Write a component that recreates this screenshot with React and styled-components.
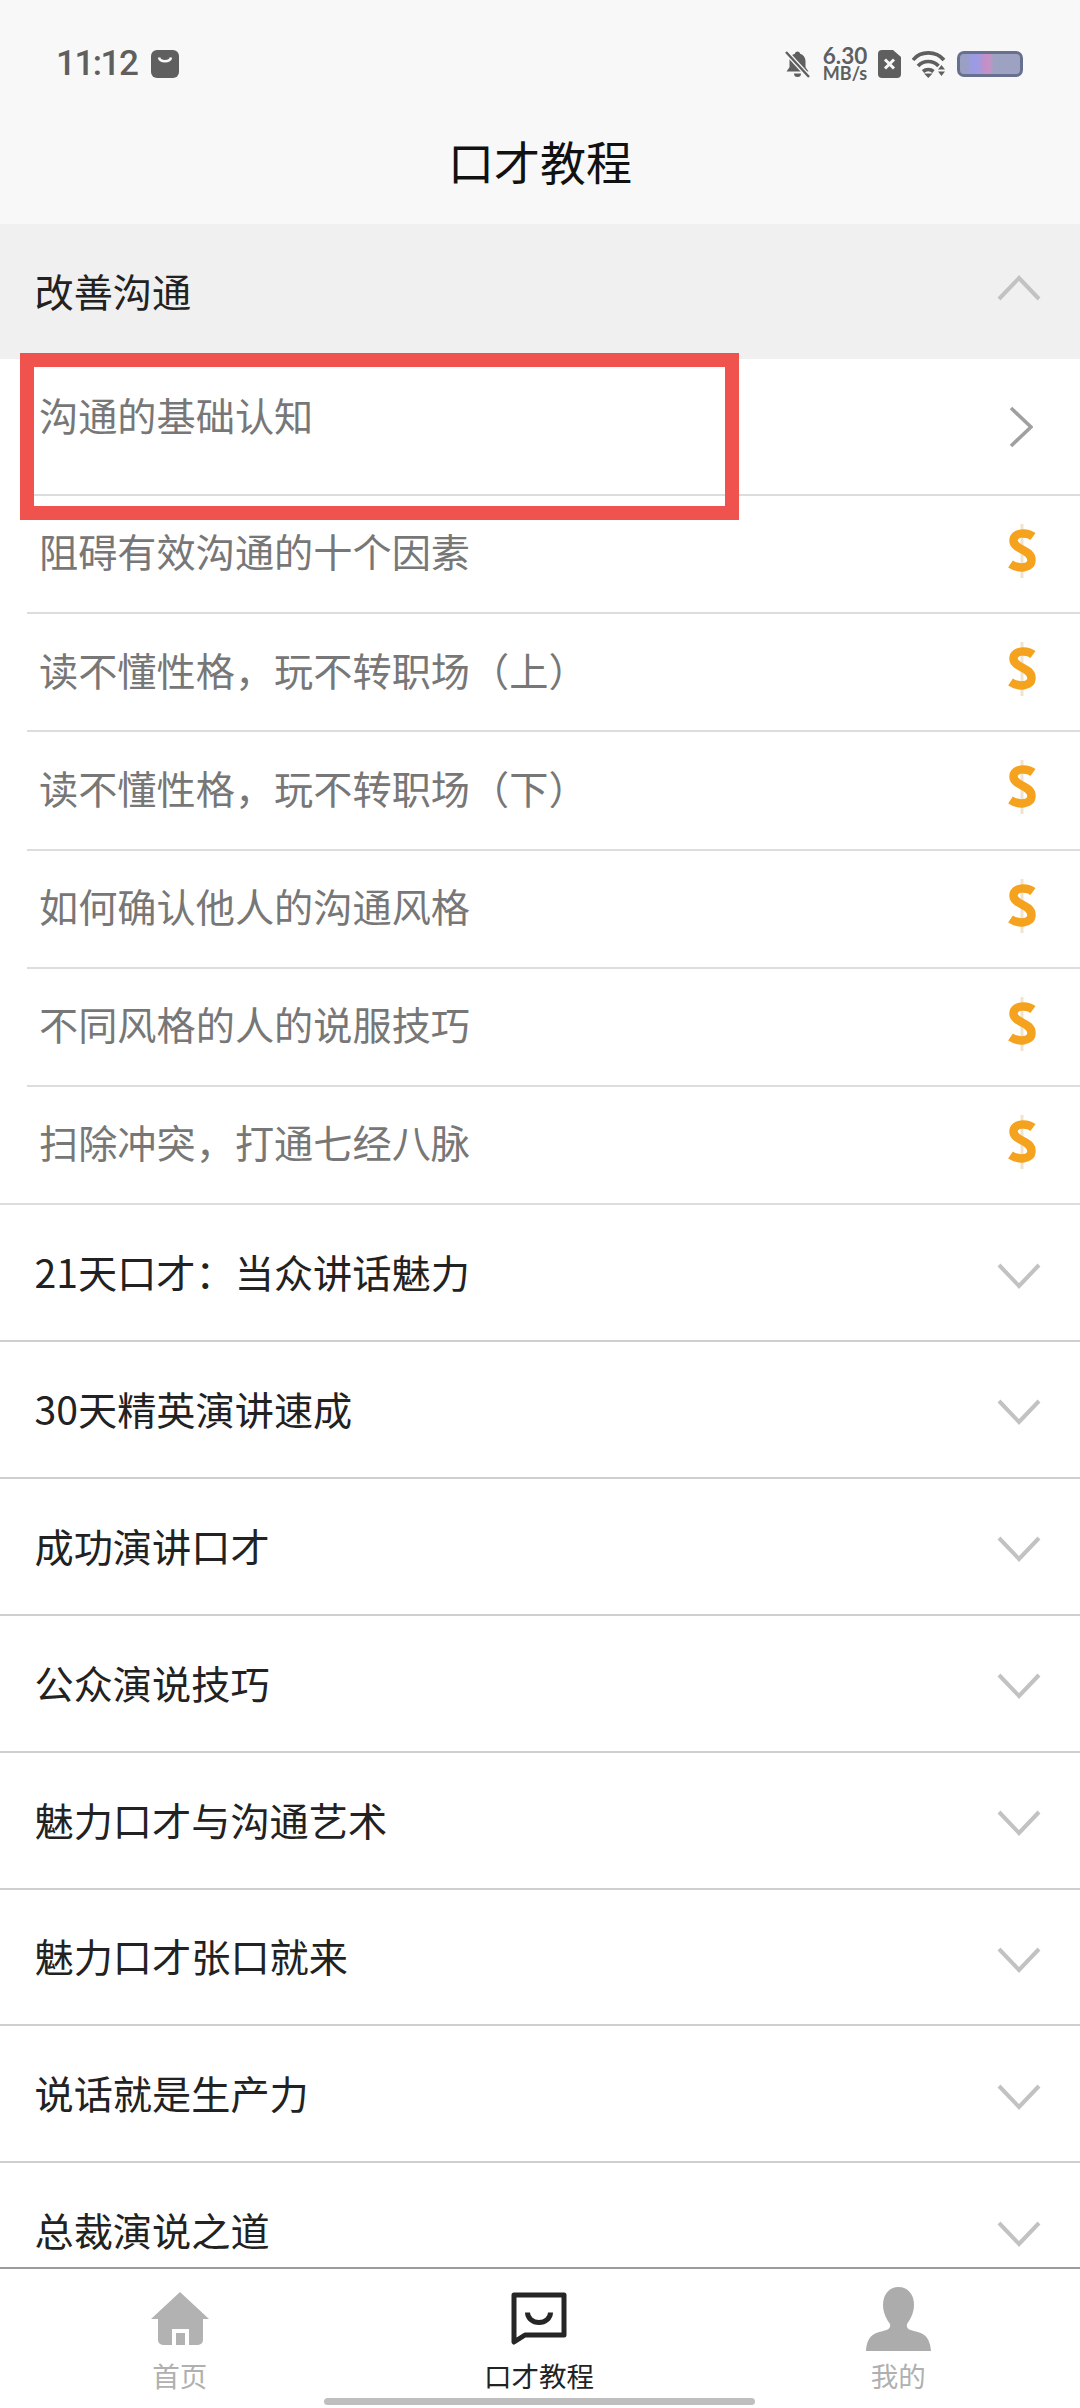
import styled, { createGlobalStyle } from "styled-components"

const GlobalStyle = createGlobalStyle`
    html, body {
        margin: 0;
        padding: 0;
        background: #ffffff;
    }
    * {
        box-sizing: border-box;
    }
`

const Page = styled.div`
    width: 1080px;
    height: 2408px;
    position: relative;
    display: flex;
    flex-direction: column;
    overflow: hidden;
    background: #ffffff;
    font-family: "Noto Sans CJK SC", "Noto Sans", sans-serif;
`
const StatusBar = styled.div`
    height: 98px;
    flex-shrink: 0;
    background: #f8f8f8;
    display: flex;
    justify-content: space-between;
    align-items: flex-start;
    padding: 46px 57px 0 56px;
    color: #5f5f5f;
`
const StatusLeft = styled.div`
    display: flex;
    align-items: center;
    gap: 14px;
    height: 36px;
`
const Clock = styled.span`
    font-family: "Roboto", sans-serif;
    font-weight: 500;
    font-size: 35px;
    line-height: 36px;
    letter-spacing: -1.5px;
`
const StatusRight = styled.div`
    display: flex;
    align-items: center;
    height: 36px;
`
const Speed = styled.div`
    width: 46px;
    margin: 0 10px 0 12px;
    display: flex;
    flex-direction: column;
    align-items: center;
    font-family: "Lato", sans-serif;
    font-weight: 700;
`
const SpeedValue = styled.span`
    font-size: 22.5px;
    line-height: 18px;
`
const SpeedUnit = styled.span`
    font-size: 18px;
    line-height: 17px;
`
const Battery = styled.div`
    width: 66px;
    height: 26px;
    margin-left: 11px;
    border: 3px solid #68708f;
    border-radius: 7px;
    background: linear-gradient(
        90deg,
        #9a9fc4 0 10%,
        #9b9be8 22%,
        #9f9ae0 30%,
        #c48fc8 42%,
        #c890c4 48%,
        #9ea2c2 56%,
        #9ea2c2 100%
    );
`
const TitleBar = styled.div`
    height: 126px;
    flex-shrink: 0;
    background: #f8f8f8;
    display: flex;
    align-items: center;
    justify-content: center;
    padding-bottom: 2px;
`
const Title = styled.h1`
    margin: 0;
    font-size: 46px;
    font-weight: 400;
    color: #111111;
    line-height: 1;
`
const List = styled.div`
    flex: 1;
    min-height: 0;
    overflow: hidden;
`
const GroupRow = styled.div`
    height: ${props => (props.$open ? "135px" : "136.9px")};
    display: flex;
    align-items: center;
    justify-content: space-between;
    padding: 0 39px 0 34.5px;
    background: ${props => (props.$open ? "#f0f0f0" : "#ffffff")};
    border-bottom: ${props => (props.$open ? "none" : "2px solid #cfcfcf")};
`
const GroupName = styled.span`
    font-size: 39.2px;
    line-height: 1;
    color: #222222;
    margin-bottom: 2px;
`
const LessonRow = styled.div`
    height: ${props => (props.$first ? "137px" : "118.2px")};
    margin-left: ${props => (props.$last ? "0" : "27px")};
    padding: ${props => (props.$last ? "0 39px 0 39px" : "0 39px 0 12px")};
    display: flex;
    align-items: center;
    justify-content: space-between;
    border-bottom: 2px solid #dddddd;
`
const LessonName = styled.span`
    font-size: 39.2px;
    line-height: 1;
    color: #777777;
    margin-bottom: ${props => (props.$first ? "24px" : "6px")};
`
const IconBox = styled.div`
    width: 40px;
    display: flex;
    justify-content: center;
    flex-shrink: 0;
`
const TabBar = styled.div`
    height: 141px;
    flex-shrink: 0;
    border-top: 2px solid #9c9c9c;
    background: #ffffff;
    display: grid;
    grid-template-columns: repeat(3, 1fr);
    padding-right: 2px;
`
const Tab = styled.div`
    display: flex;
    flex-direction: column;
    align-items: center;
`
const TabIcon = styled.div`
    height: 82px;
    display: flex;
    align-items: flex-end;
    justify-content: center;
    padding-bottom: ${props => props.$pad || "0"};
`
const TabLabel = styled.span`
    margin-top: 9px;
    font-size: 27.5px;
    line-height: 30px;
    color: ${props => (props.$active ? "#222222" : "#b0b0b0")};
`
const Highlight = styled.div`
    position: absolute;
    left: 20px;
    top: 353px;
    width: 719px;
    height: 167px;
    border: 14px solid #f0534e;
    pointer-events: none;
`
const GestureBar = styled.div`
    position: absolute;
    left: 324px;
    top: 2398px;
    width: 431px;
    height: 7px;
    border-radius: 4px;
    background: #bfbfbf;
`
const WifiSvg = styled.svg`
    margin-left: 11px;
`
const FoldSvg = styled.svg`
    margin: ${props => (props.$up ? "0 0 7px 0" : "6px 0 0 0")};
`
const DollarSvg = styled.svg`
    margin: 0 -1px 6px 0;
`

const BagIcon = () => (
    <svg width="28" height="28" viewBox="0 0 28 28">
        <rect width="28" height="28" rx="6" fill="#5f5f5f" />
        <path d="M8 7.5c1 5 11 5 12 0" fill="none" stroke="#f8f8f8" strokeWidth="2.6" />
    </svg>
)

const MuteIcon = () => (
    <svg width="25" height="27" viewBox="0 0 25 27">
        <path d="M12.5 0.5c1.5 0 2.4 1 2.6 2.2 3.4 1 5.4 4 5.4 7.6v6l3 4.2H1.5l3-4.2v-6c0-3.6 2-6.6 5.4-7.6C10.1 1.5 11 .5 12.5 .5z" fill="#5f5f5f" />
        <path d="M9 22.5h7a3.5 3.5 0 0 1-7 0z" fill="#5f5f5f" />
        <path d="M1 1l23 25" stroke="#f8f8f8" strokeWidth="5" />
        <path d="M1 1l23 25" stroke="#5f5f5f" strokeWidth="2.4" />
    </svg>
)

const SimIcon = () => (
    <svg width="23" height="28" viewBox="0 0 23 28">
        <path d="M4 0h11l8 7v17a4 4 0 0 1-4 4H4a4 4 0 0 1-4-4V4a4 4 0 0 1 4-4z" fill="#5f5f5f" />
        <path d="M7 9.5l9 9M16 9.5l-9 9" stroke="#f8f8f8" strokeWidth="3" />
    </svg>
)

const WifiIcon = () => (
    <WifiSvg width="34" height="27" viewBox="0 0 34 27">
        <g fill="none" stroke="#5f5f5f" strokeWidth="3.6">
            <path d="M1 9C8.5-.5 24-.5 32 9" />
            <path d="M6 15c5.5-6 15-6 20.5 0" />
            <path d="M11 20.5c3-2.5 7.5-2.5 10.5 0" />
        </g>
        <path d="M12 22.5h8.5l-4.2 4.5zM29.5 14l3.5 4.5h-7zM26 20.5h7l-3.5 4.5z" fill="#5f5f5f" />
    </WifiSvg>
)

const ChevronUp = () => (
    <FoldSvg $up width="44" height="26" viewBox="0 0 44 26">
        <path d="M2 24L22 3l20 21" fill="none" stroke="#c2c2c2" strokeWidth="4" />
    </FoldSvg>
)

const ChevronDown = () => (
    <FoldSvg width="44" height="26" viewBox="0 0 44 26">
        <path d="M2 2l20 21L42 2" fill="none" stroke="#c2c2c2" strokeWidth="4" />
    </FoldSvg>
)

const ChevronRight = () => (
    <svg width="24" height="42" viewBox="0 0 24 42">
        <path d="M2 2l20 19L2 40" fill="none" stroke="#a0a0a0" strokeWidth="3.6" />
    </svg>
)

const DollarIcon = () => (
    <DollarSvg width="30" height="54" viewBox="0 0 30 54">
        <path d="M15 0v54" stroke="#eee3cf" strokeWidth="3" />
        <path d="M26 12.5C20 8 6.5 8 6.5 16.5 6.5 26 24.5 25 24.5 36 24.5 45 11 45 3.5 40" fill="none" stroke="#f5a31f" strokeWidth="8.5" />
    </DollarSvg>
)

const HomeIcon = () => (
    <svg width="58" height="54" viewBox="0 0 58 54">
        <path d="M29 0l29 27H52v21a5 5 0 0 1-5 5H38V37H21v16H12a5 5 0 0 1-5-5V27H0z" fill="#b2b2b2" />
        <rect x="25" y="41" width="9" height="12" fill="#b2b2b2" />
    </svg>
)

const CourseIcon = () => (
    <svg width="56" height="55" viewBox="0 0 56 55">
        <path d="M3 3h50v40H14L3 50z" fill="none" stroke="#262626" strokeWidth="5" strokeLinejoin="round" />
        <path d="M16.5 20.5a11.5 10 0 0 0 23 0" fill="none" stroke="#262626" strokeWidth="5" />
    </svg>
)

const UserIcon = () => (
    <svg width="65" height="64" viewBox="0 0 65 64">
        <path d="M32.5 0c9 0 15.5 7 15.5 18 0 8-4 15-7 19-1 4 2 6 7 7 8 2 16 4 17 20H0c1-16 9-18 17-20 5-1 8-3 7-7-3-4-7-11-7-19C17 7 23.5 0 32.5 0z" fill="#acacac" />
    </svg>
)

const lessons = [
    "沟通的基础认知",
    "阻碍有效沟通的十个因素",
    "读不懂性格，玩不转职场（上）",
    "读不懂性格，玩不转职场（下）",
    "如何确认他人的沟通风格",
    "不同风格的人的说服技巧",
    "扫除冲突，打通七经八脉",
]

const groups = [
    "21天口才：当众讲话魅力",
    "30天精英演讲速成",
    "成功演讲口才",
    "公众演说技巧",
    "魅力口才与沟通艺术",
    "魅力口才张口就来",
    "说话就是生产力",
    "总裁演说之道",
]

const App = () => {
    return (
        <Page>
            <GlobalStyle />
            <StatusBar>
                <StatusLeft>
                    <Clock>11:12</Clock>
                    <BagIcon />
                </StatusLeft>
                <StatusRight>
                    <MuteIcon />
                    <Speed>
                        <SpeedValue>6.30</SpeedValue>
                        <SpeedUnit>MB/s</SpeedUnit>
                    </Speed>
                    <SimIcon />
                    <WifiIcon />
                    <Battery />
                </StatusRight>
            </StatusBar>
            <TitleBar>
                <Title>口才教程</Title>
            </TitleBar>
            <List>
                <GroupRow $open>
                    <GroupName>改善沟通</GroupName>
                    <ChevronUp />
                </GroupRow>
                {lessons.map((name, i) => (
                    <LessonRow key={name} $first={i === 0} $last={i === lessons.length - 1}>
                        <LessonName $first={i === 0}>{name}</LessonName>
                        <IconBox>{i === 0 ? <ChevronRight /> : <DollarIcon />}</IconBox>
                    </LessonRow>
                ))}
                {groups.map((name) => (
                    <GroupRow key={name}>
                        <GroupName>{name}</GroupName>
                        <ChevronDown />
                    </GroupRow>
                ))}
            </List>
            <TabBar>
                <Tab>
                    <TabIcon $pad="5px"><HomeIcon /></TabIcon>
                    <TabLabel>首页</TabLabel>
                </Tab>
                <Tab>
                    <TabIcon $pad="4px"><CourseIcon /></TabIcon>
                    <TabLabel $active>口才教程</TabLabel>
                </Tab>
                <Tab>
                    <TabIcon><UserIcon /></TabIcon>
                    <TabLabel>我的</TabLabel>
                </Tab>
            </TabBar>
            <Highlight />
            <GestureBar />
        </Page>
    )
}

export default App
